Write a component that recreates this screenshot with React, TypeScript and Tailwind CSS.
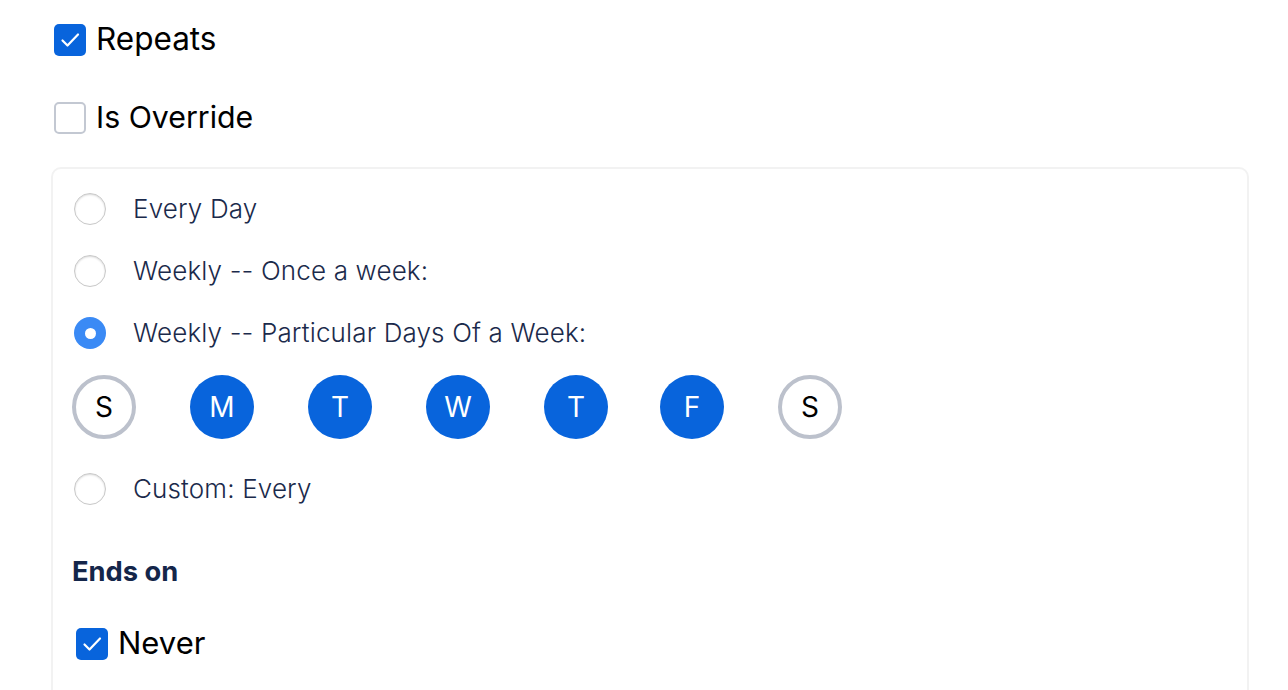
import React from "react";

function CheckBox({ checked }: { checked: boolean }) {
  if (checked) {
    return (
      <div className="w-8 h-8 rounded-[5px] bg-[#0864dc] flex items-center justify-center shrink-0">
        <svg width="32" height="32" viewBox="0 0 32 32" fill="none">
          <path d="M8.5 16.5 L13.5 21.5 L24 10.5" stroke="white" strokeWidth="2.2" strokeLinecap="round" strokeLinejoin="round" />
        </svg>
      </div>
    );
  }
  return <div className="w-8 h-8 rounded-[5px] border-2 border-[#c3c8d2] bg-white shrink-0" />;
}

function Radio({ checked }: { checked: boolean }) {
  if (checked) {
    return (
      <div className="w-8 h-8 rounded-full bg-[#3a8af5] flex items-center justify-center shrink-0">
        <div className="w-[11px] h-[11px] rounded-full bg-white" />
      </div>
    );
  }
  return (
    <div className="w-8 h-8 rounded-full border border-[#c8c8c8] bg-white shadow-[inset_0_1px_2px_rgba(0,0,0,0.15)] shrink-0" />
  );
}

const days = [
  { l: "S", on: false },
  { l: "M", on: true },
  { l: "T", on: true },
  { l: "W", on: true },
  { l: "T", on: true },
  { l: "F", on: true },
  { l: "S", on: false },
];

const labelFont = { fontFamily: "Inter, 'Noto Sans', sans-serif" };

export default function App() {
  const sans = { fontFamily: "Inter, 'Noto Sans', sans-serif" };
  return (
    <div className="w-[1288px] h-[690px] bg-white overflow-hidden" style={sans}>
      <div className="pl-[54px] pt-[24px] pr-[39px]">
        <div className="flex items-center gap-[10px] h-8">
          <CheckBox checked />
          <span className="text-[31.5px] text-black leading-none -mt-[3px]">Repeats</span>
        </div>
        <div className="flex items-center gap-[10px] h-8 mt-[46px]">
          <CheckBox checked={false} />
          <span className="text-[30.3px] text-black leading-none -mt-[2px]">Is Override</span>
        </div>
      </div>
      <div className="ml-[51px] mr-[39px] mt-[33px] border-2 border-[#f2f2f2] rounded-[10px] pl-[21px] pt-[24px] h-[600px]">
        <div className="flex flex-col gap-[30px] text-[#1b2a4b]" style={labelFont}>
          {["Every Day", "Weekly -- Once a week:", "Weekly -- Particular Days Of a Week:"].map((t, i) => (
            <div key={t} className="flex items-center h-8">
              <Radio checked={i === 2} />
              <span className="ml-[27px] text-[26px] tracking-[0.15px] font-light leading-none">{t}</span>
            </div>
          ))}
        </div>
        <div className="flex items-center mt-[26px] -ml-[2px]">
          {days.map((d, i) => {
            const gap = i === 0 ? "" : i === 5 ? "ml-[52px]" : "ml-[54px]";
            return d.on ? (
              <div key={i} className={`${gap} w-16 h-16 rounded-full bg-[#0864dc] text-white flex items-center justify-center text-[28px]`}>
                {d.l}
              </div>
            ) : (
              <div key={i} className={`${gap} w-16 h-16 rounded-full border-[4px] border-[#bcc1cc] text-black flex items-center justify-center text-[28px]`}>
                {d.l}
              </div>
            );
          })}
        </div>
        <div className="flex items-center h-8 mt-[34px] text-[#1b2a4b]" style={labelFont}>
          <Radio checked={false} />
          <span className="ml-[27px] text-[26px] tracking-[0.15px] font-light leading-none">Custom: Every</span>
        </div>
        <div className="mt-[53px] -ml-[2px] text-[27.3px] font-bold text-[#14264a] leading-none">Ends on</div>
        <div className="flex items-center gap-[10px] h-8 mt-[43px] ml-[2px]">
          <CheckBox checked />
          <span className="text-[31px] text-black leading-none -mt-[3px]">Never</span>
        </div>
      </div>
    </div>
  );
}
